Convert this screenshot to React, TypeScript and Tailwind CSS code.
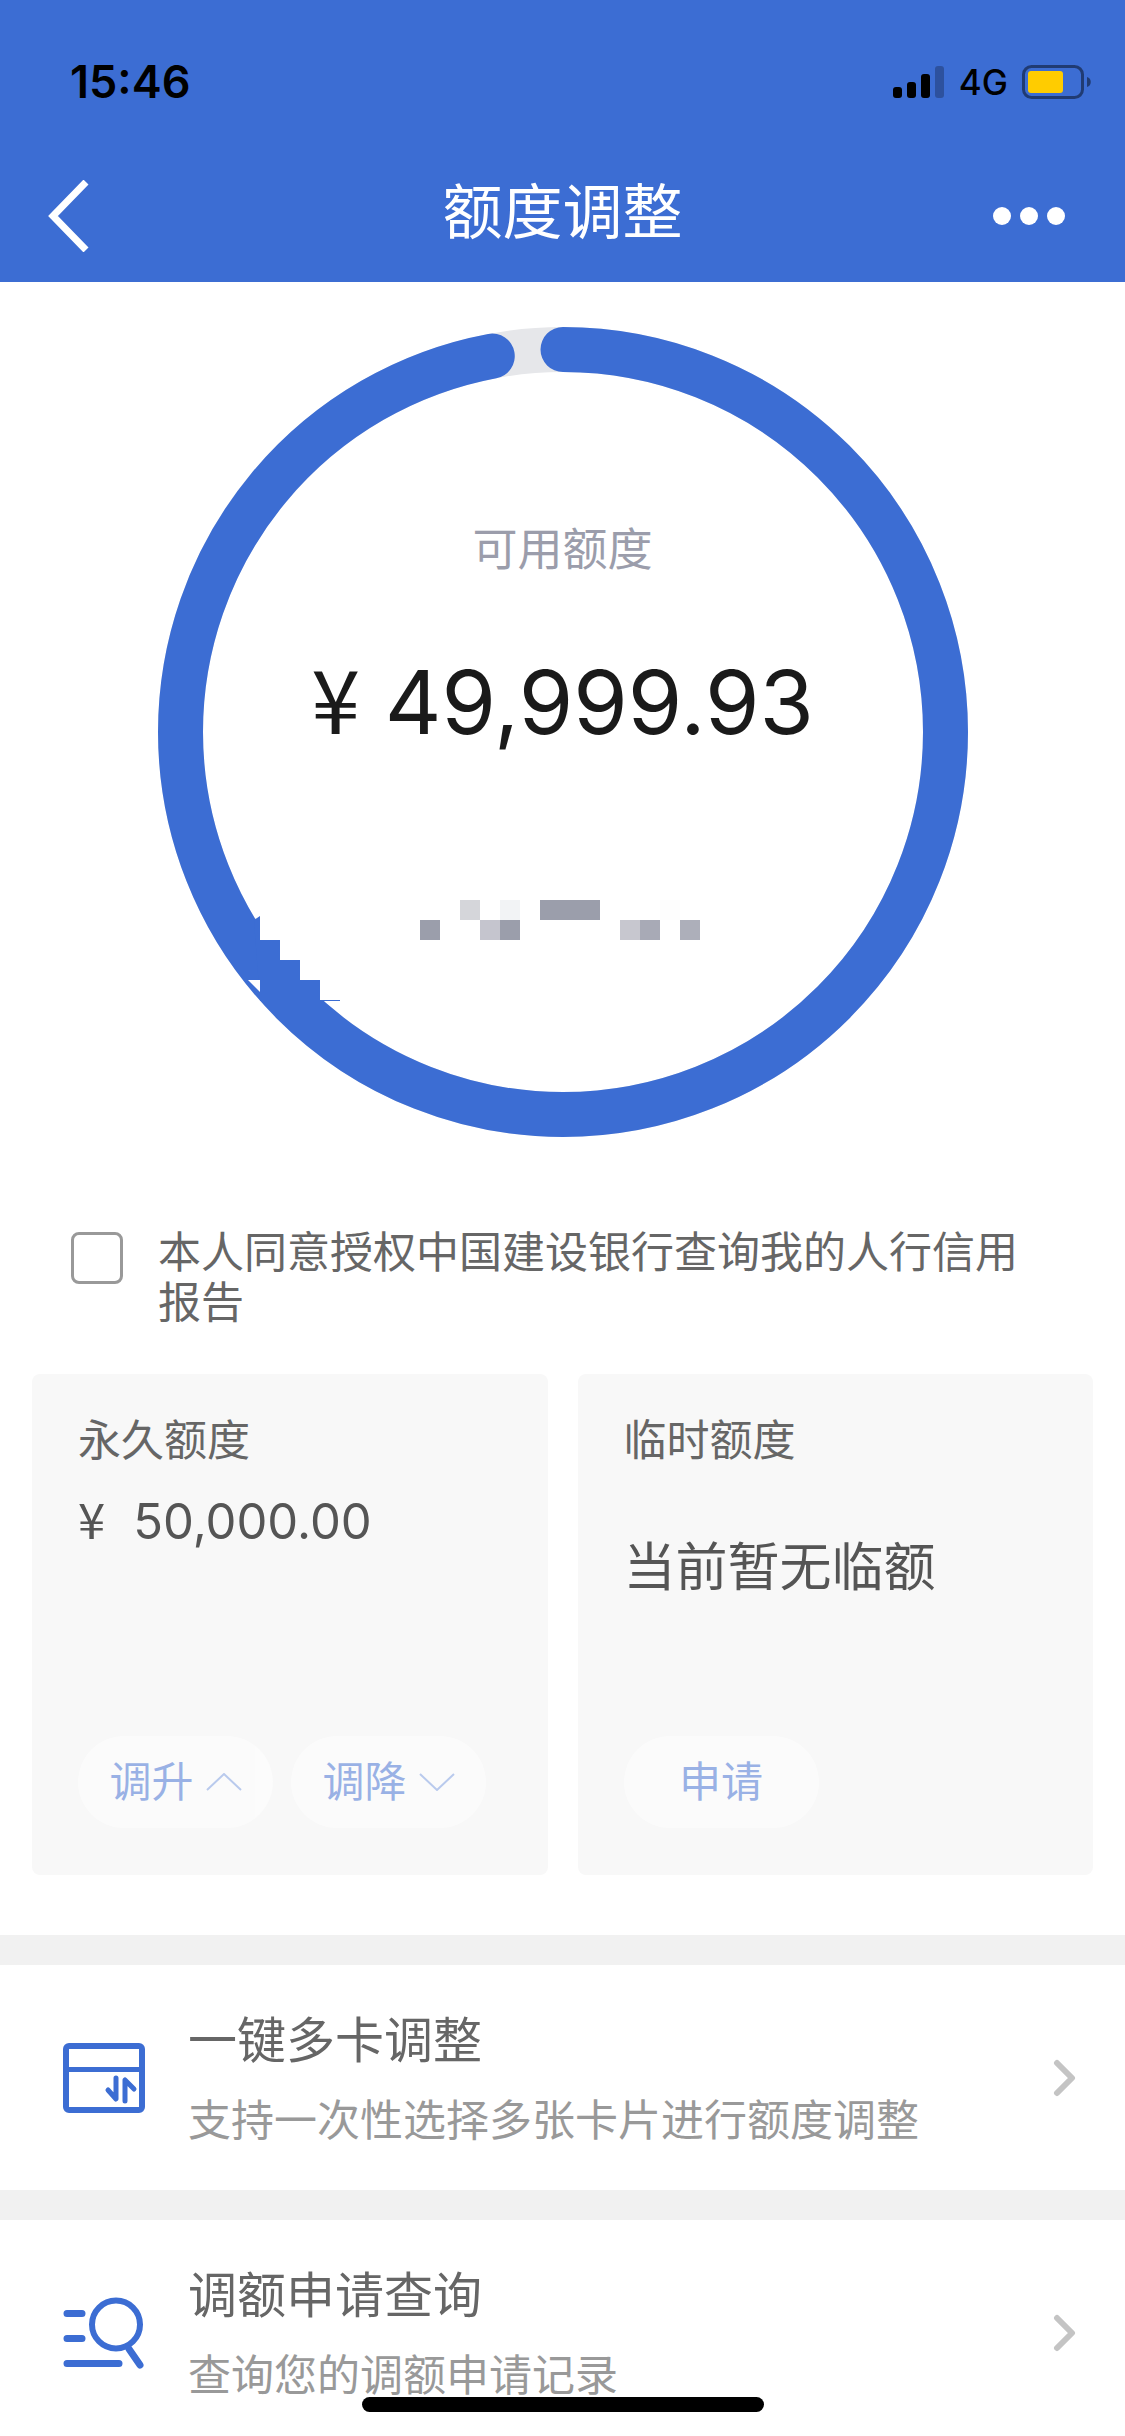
import { ReactNode, useState } from "react"

const USED_RATIO = 0.97
const RING_RADIUS = 382.5
const RING_LENGTH = 2 * Math.PI * RING_RADIUS

// column, row, width and fill of the cells covering the hidden text
const MASK_CELLS: [number, number, number, string][] = [
  [13, 29, 1, "#9b9eab"],
  [15, 28, 1, "#d5d6da"],
  [16, 29, 1, "#c5c5ce"],
  [17, 28, 1, "#f2f3f5"],
  [17, 29, 1, "#9b9eab"],
  [19, 28, 3, "#9b9eab"],
  [23, 29, 1, "#c7c7cf"],
  [24, 29, 1, "#a8aab6"],
  [25, 28, 1, "#fdfdfd"],
  [26, 29, 1, "#adafba"],
]

export default function App() {
  return (
    <div className="flex h-dvh flex-col overflow-y-auto bg-white font-['Inter','Noto_Sans_CJK_SC',sans-serif] [scrollbar-width:none]">
      <header className="shrink-0 bg-[#3c6dd3]">
        <StatusBar />
        <NavBar />
      </header>
      <main>
        <CreditRing />
        <Consent />
        <section className="grid grid-cols-2 gap-[30px] px-8 pt-[47px] pb-[60px]">
          <LimitCard title="永久额度">
            <p className="flex items-baseline gap-7 text-[49px] leading-[64px]">
              <Yen />
              50,000.00
            </p>
            <div className="mt-auto flex gap-[18px]">
              <PillButton>
                调升
                <Caret d="M1 17 18 1l17 16" />
              </PillButton>
              <PillButton>
                调降
                <Caret d="m1 1 17 16L35 1" />
              </PillButton>
            </div>
          </LimitCard>
          <LimitCard title="临时额度">
            <p className="pt-[50px] text-[52px] leading-[64px]">当前暂无临额</p>
            <div className="mt-auto flex gap-[18px]">
              <PillButton>申请</PillButton>
            </div>
          </LimitCard>
        </section>
        <nav>
          <MenuRow
            title="一键多卡调整"
            description="支持一次性选择多张卡片进行额度调整"
            icon={<CardIcon />}
          />
          <MenuRow
            title="调额申请查询"
            description="查询您的调额申请记录"
            icon={<SearchIcon />}
          />
        </nav>
      </main>
      <div className="fixed bottom-6 left-1/2 h-[15px] w-[402px] -translate-x-1/2 rounded-full bg-black" />
    </div>
  )
}

const StatusBar = () => {
  return (
    <div className="flex h-[132px] items-center justify-between pt-8 pr-[33px] pl-[70px] text-black">
      <span className="text-[45px] leading-[48px] font-semibold">15:46</span>
      <div className="flex items-center gap-3.5">
        <svg width="52" height="34" viewBox="0 0 52 34" aria-hidden="true">
          <rect x="0" y="22" width="9" height="11" rx="3" />
          <rect x="14" y="17" width="9" height="16" rx="3" />
          <rect x="28" y="9" width="9" height="24" rx="3" />
          <rect x="42" y="1" width="9" height="32" rx="3" opacity="0.25" />
        </svg>
        <span className="text-[35px] leading-[40px] font-medium">4G</span>
        <svg width="70" height="34" viewBox="0 0 70 34" aria-hidden="true">
          <g opacity="0.45">
            <rect
              x="1.5"
              y="1.5"
              width="59"
              height="31"
              rx="8"
              fill="none"
              stroke="black"
              strokeWidth="3"
            />
            <path d="M65 12c5 1 5 9 0 10z" />
          </g>
          <rect x="6" y="6" width="35" height="22" rx="3" fill="#ffcc00" />
        </svg>
      </div>
    </div>
  )
}

const NavBar = () => {
  return (
    <div className="grid h-[150px] grid-cols-[1fr_auto_1fr] items-center pt-2.5 text-white">
      <button type="button" aria-label="返回" className="justify-self-start pt-2 pl-12">
        <svg width="42" height="72" viewBox="0 0 42 72" fill="none">
          <path d="M38 2 5 36l33 34" stroke="currentColor" strokeWidth="7" />
        </svg>
      </button>
      <h1 className="text-[60px] leading-[80px]">额度调整</h1>
      <button
        type="button"
        aria-label="更多"
        className="flex gap-[9px] justify-self-end pt-2 pr-[60px]"
      >
        <span className="size-[18px] rounded-full bg-white" />
        <span className="size-[18px] rounded-full bg-white" />
        <span className="size-[18px] rounded-full bg-white" />
      </button>
    </div>
  )
}

const CreditRing = () => {
  return (
    <section className="grid justify-center pt-[45px]">
      <svg
        className="w-[810px] max-w-full [grid-area:1/1]"
        viewBox="0 0 810 810"
        fill="none"
        aria-hidden="true"
      >
        <circle cx="405" cy="405" r={RING_RADIUS} stroke="#e6e7ea" strokeWidth="45" />
        <circle
          cx="405"
          cy="405"
          r={RING_RADIUS}
          stroke="#3c6dd3"
          strokeWidth="45"
          strokeLinecap="round"
          strokeDasharray={`${RING_LENGTH * USED_RATIO} ${RING_LENGTH}`}
          transform="rotate(-90 405 405)"
        />
        <g transform="translate(2 13)">
          <path d="M100 580h80v80h-80z" fill="white" />
          <path
            d="M94 580l6-4v24h20v20h20v20h20v20h20v1h-80z"
            fill="#3c6dd3"
          />
          <path d="M88 640h12v12z" fill="white" />
          {MASK_CELLS.map(([col, row, width, fill]) => (
            <rect
              key={`${col}-${row}`}
              x={col * 20}
              y={row * 20}
              width={width * 20}
              height="20"
              fill={fill}
            />
          ))}
        </g>
      </svg>
      <div className="pt-[193px] text-center [grid-area:1/1]">
        <p className="text-[45px] leading-[60px] text-[#9b9dab]">可用额度</p>
        <p className="mt-[66px] text-[88px] leading-[100px] text-[#1a1a1a]">
          <Yen /> 49,999.93
        </p>
      </div>
    </section>
  )
}

const Yen = () => <span className="font-['Noto_Sans_CJK_SC',sans-serif]">¥</span>

const Consent = () => {
  const [agreed, setAgreed] = useState(false)

  return (
    <label className="flex items-start gap-[35px] pt-[90px] pr-[90px] pl-[71px] text-[43px] leading-[50px] text-[#666]">
      <input
        type="checkbox"
        checked={agreed}
        onChange={(e) => setAgreed(e.target.checked)}
        className="mt-[5px] size-[52px] shrink-0 appearance-none rounded-lg border-3 border-[#999] checked:bg-[#3c6dd3]"
      />
      <span>本人同意授权中国建设银行查询我的人行信用报告</span>
    </label>
  )
}

const LimitCard = ({ title, children }: { title: string; children: ReactNode }) => {
  return (
    <div className="flex min-h-[501px] flex-col rounded-lg bg-[#f8f8f8] px-[46px] pt-9 pb-[47px] text-[#555]">
      <h2 className="mb-4 text-[43px] leading-[60px] text-[#666]">{title}</h2>
      {children}
    </div>
  )
}

const PillButton = ({ children }: { children: ReactNode }) => {
  return (
    <button
      type="button"
      disabled
      className="flex h-[92px] w-[195px] items-center justify-center gap-3 rounded-full bg-white text-[42px] leading-[60px] text-[#3c6dd3] opacity-50"
    >
      {children}
    </button>
  )
}

const Caret = ({ d }: { d: string }) => (
  <svg width="36" height="18" viewBox="0 0 36 18" fill="none" aria-hidden="true">
    <path d={d} stroke="#7c9ee4" strokeWidth="2" />
  </svg>
)

type MenuRowProps = {
  title: string
  description: string
  icon: ReactNode
}

const MenuRow = ({ title, description, icon }: MenuRowProps) => {
  return (
    <a
      href="#"
      className="flex h-[255px] items-center border-t-30 border-[#f1f1f1] pr-12 pl-[63px]"
    >
      {icon}
      <span className="flex flex-1 flex-col pt-[5px] pl-[43px]">
        <span className="text-[49px] leading-[80px] text-[#666]">{title}</span>
        <span className="text-[43px] leading-[78px] text-[#999]">{description}</span>
      </span>
      <svg width="24" height="38" viewBox="0 0 24 38" fill="none" aria-hidden="true">
        <path
          d="m4 4 15 15L4 34"
          stroke="#c4c4c4"
          strokeWidth="6"
          strokeLinecap="round"
          strokeLinejoin="round"
        />
      </svg>
    </a>
  )
}

const CardIcon = () => (
  <svg
    width="82"
    height="70"
    viewBox="0 0 82 70"
    fill="none"
    stroke="#3c6dd3"
    strokeLinecap="round"
    strokeLinejoin="round"
    aria-hidden="true"
  >
    <rect x="3" y="3" width="76" height="64" rx="3" strokeWidth="6" />
    <path d="M3 26.5h76" strokeWidth="5" />
    <path d="m45 47 8 9V35M71 46l-9-9v21" strokeWidth="5" />
  </svg>
)

const SearchIcon = () => (
  <svg
    width="82"
    height="72"
    viewBox="0 0 82 72"
    fill="none"
    stroke="#3c6dd3"
    strokeLinecap="round"
    aria-hidden="true"
  >
    <circle cx="53" cy="27.5" r="24" strokeWidth="6" />
    <path d="M4 16.5h15M4 41.5h15M4 66.5h52M66 52l11 16" strokeWidth="7" />
  </svg>
)
